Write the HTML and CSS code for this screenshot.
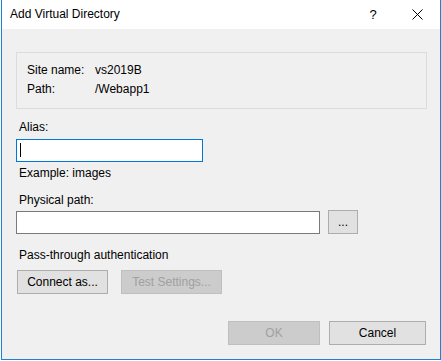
FILE: index.html
```html
<!DOCTYPE html>
<html lang="en">
<head>
    <meta charset="UTF-8">
    <title>Add Virtual Directory</title>
    <link rel="stylesheet" href="styles.css">
</head>
<body>
    <div class="dialog">
        <div class="titlebar">
            <span class="title">Add Virtual Directory</span>
            <span class="tb-btn help">?</span>
            <span class="tb-btn close">
                <svg width="11" height="11" viewBox="0 0 11 11"><path d="M0.5 0.5L10.5 10.5M10.5 0.5L0.5 10.5" stroke="#000" stroke-width="1"/></svg>
            </span>
        </div>
        <div class="content">
            <div class="info">
                <div class="info-row"><span class="info-label">Site name:</span><span>vs2019B</span></div>
                <div class="info-row"><span class="info-label">Path:</span><span>/Webapp1</span></div>
            </div>

            <div class="field-label alias-label">Alias:</div>
            <div class="textbox alias focused"><span class="caret"></span></div>
            <div class="field-label hint">Example: images</div>

            <div class="field-label path-label">Physical path:</div>
            <div class="path-row">
                <div class="textbox path"></div>
                <button class="btn browse">...</button>
            </div>

            <div class="field-label section">Pass-through authentication</div>
            <div class="btn-row">
                <button class="btn connect">Connect as...</button>
                <button class="btn test" disabled>Test Settings...</button>
            </div>

            <div class="footer">
                <button class="btn ok" disabled>OK</button>
                <button class="btn cancel">Cancel</button>
            </div>
        </div>
    </div>
</body>
</html>
```

FILE: styles.css
```css
*{
    margin: 0;
    padding: 0;
    box-sizing: border-box;
}
body{
    background: #fff;
    font-family: "Liberation Sans", Arial, sans-serif;
    font-size: 12px;
    color: #000;
}
.dialog{
    margin-left: 1px;
    width: 440px;
    height: 360px;
    border: 1px solid #1883d7;
    border-top: none;
    background: #f0f0f0;
    display: flex;
    flex-direction: column;
}

/*---标题栏---*/
.titlebar{
    height: 29px;
    background: #fff;
    display: flex;
    align-items: center;
    padding-left: 8px;
    line-height: 29px;
}
.titlebar .title{
    flex: 1;
}
.titlebar .tb-btn{
    display: flex;
    justify-content: center;
    align-items: center;
    height: 29px;
}
.titlebar .help{
    width: 44px;
    font-size: 13px;
}
.titlebar .close{
    width: 45px;
}

/*---内容---*/
.content{
    flex: 1;
    padding: 23px 14px 0 14px;
    display: flex;
    flex-direction: column;
    align-items: flex-start;
}
.info{
    width: 411px;
    border: 1px solid #dcdcdc;
    padding: 8px 10px 9px 10px;
}
.info-row{
    display: flex;
    line-height: 19px;
}
.info-label{
    width: 68px;
}
.field-label{
    line-height: 15px;
    padding-left: 3px;
}
.alias-label{
    margin-top: 11px;
}
.hint{
    margin-top: 4px;
}
.path-label{
    margin-top: 12px;
}
.section{
    margin-top: 14px;
}
.textbox{
    height: 23px;
    background: #fff;
    border: 1px solid #7a7a7a;
}
.textbox.focused{
    border-color: #0078d7;
}
.alias{
    width: 187px;
    margin-top: 4px;
    padding: 3px 0 0 3px;
}
.caret{
    display: block;
    width: 1px;
    height: 14px;
    background: #000;
}
.path-row{
    display: flex;
    align-items: flex-start;
    margin-top: 2px;
}
.path{
    width: 304px;
    margin-top: 1px;
}

/*---按钮---*/
.btn{
    height: 24px;
    font-family: inherit;
    font-size: 12px;
    color: #000;
    background: #e1e1e1;
    border: 1px solid #adadad;
    outline: none;
}
.btn:disabled{
    background: #cccccc;
    border-color: #bfbfbf;
    color: #a0a0a0;
}
.browse{
    width: 30px;
    margin-left: 8px;
}
.btn-row{
    display: flex;
    margin-top: 7px;
    padding-left: 1px;
}
.connect{
    width: 91px;
}
.test{
    width: 101px;
    margin-left: 13px;
}
.footer{
    align-self: stretch;
    display: flex;
    justify-content: flex-end;
    margin-top: 27px;
}
.ok{
    width: 92px;
}
.cancel{
    width: 97px;
    margin-left: 9px;
}
```
